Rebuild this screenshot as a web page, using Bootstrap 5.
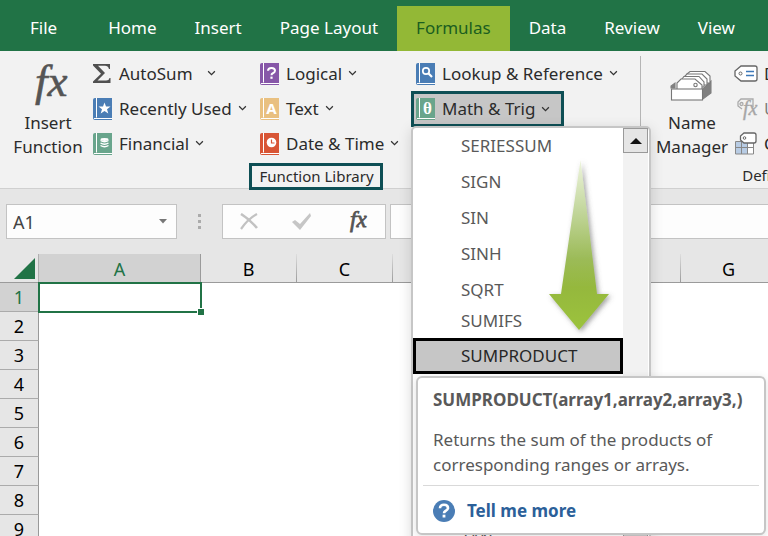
<!DOCTYPE html>
<html lang="en">
<head>
<meta charset="utf-8">
<meta name="viewport" content="width=device-width, initial-scale=1">
<title>Formulas – Math &amp; Trig</title>
<link rel="stylesheet" href="https://cdn.jsdelivr.net/npm/bootstrap@5.3.0/dist/css/bootstrap.min.css">
<style>
body{font-family:"Noto Sans","Open Sans",sans-serif;font-size:17px;line-height:24px;color:#2b2b2b;background:#fff}
button{font:inherit;color:inherit;background:none;border:0;padding:0;text-align:left;white-space:nowrap}
svg{display:block;flex:none}
.fx-glyph{font-family:"Liberation Serif",serif;font-style:italic;fill:#555;stroke:#555}
.tabs-bar{background:#217346;padding:6px 0 0 11px}
.tabs-bar .nav-link{color:#fff;padding:10px 19px 11px;white-space:nowrap;border-radius:0}
.tabs-bar .nav-link.file-tab{margin-right:13px}
.tabs-bar .nav-link.active{background:#93b836;color:#1b5e20}
.ribbon{background:#f2f2f2;height:138px;border-bottom:1px solid #d0d0d0;padding-top:5px}
.ribbon-group{flex:none}
.lib-group{width:641px;border-right:1px solid #b5b5b5;margin-bottom:5px}
.cmd{height:35px;display:flex;align-items:center;gap:6px;padding-left:5px}
.big-cmd{line-height:24px;text-align:center;padding-top:8px;display:flex;flex-direction:column;align-items:center}
.fn-cmd{width:88px;padding-left:8px}
.cmd-col-a{width:167px}
.cmd-col-b{width:156px}
.is-open{background:#c6c6c6;outline:3px solid #0e4f55;outline-offset:-3px;height:36px;width:153px}
.group-label{font-size:15px;line-height:21px}
.lib-label{border:3px solid #0e4f55;background:#f2f2f2;padding:0 6px 0 7px;margin-top:2px}
.name-cmd{width:88px;padding-left:14px}
.menu-panel{position:absolute;top:35px;left:0;z-index:20;width:240px;background:#fff;border:2px solid #c6c6c6;border-radius:5px;box-shadow:0 3px 14px rgba(0,0,0,.14);color:#595959}
.menu-list{width:210px}
.menu-list button{display:block;width:100%;height:36px;padding-left:48px;white-space:nowrap}
.menu-list .short-item{height:30px;padding-bottom:4px}
.menu-list .picked{background:#c6c6c6;outline:3px solid #000;outline-offset:-3px;color:#262626}
.menu-list .after-tip{margin-top:146px}
.scroll-track{background:#f2f2f2;width:25px}
.scroll-btn{width:25px;height:25px;border:1px solid #999;background:#e5e5e5;display:flex;align-items:center;justify-content:center}
.scroll-thumb{background:#cdcdcd;border:1px solid #999;height:40px}
.guide-arrow{position:absolute;left:132px;top:28px}
.tip-card{position:absolute;left:3px;top:38px;width:350px;background:#fff;border:2px solid #c6c6c6;border-radius:6px;color:#595959;box-shadow:0 2px 8px rgba(0,0,0,.12);padding:10px 5px 0}
.tip-card>*{padding-left:10px}
.tip-card h2{font-size:17px;line-height:24px;font-weight:700;margin:0 0 15px}
.tip-card p{font-size:17px;line-height:25px;margin:0;padding-bottom:8px;border-bottom:1px solid #d9d9d9}
.tip-card a{color:#2b6099;font-weight:700;text-decoration:none;gap:12px;padding-top:13px;padding-bottom:10px}
.formula-bar{background:#e6e6e6;padding:15px 0 15px 6px}
.bar-box{background:#fdfdfd;border:1px solid #c3c3c3;height:35px}
.name-box{width:171px}
.name-box input{border:0;background:none;width:100%;color:#444;font-size:18px;padding:0 6px;outline:0}
.bar-tools{width:164px;margin-right:4px}
.dots{width:45px}
.sheet{table-layout:fixed;width:100%;min-width:1064px;border-collapse:separate;border-spacing:0;font-size:18px;line-height:28px;color:#000}
.sheet th{background:#e6e6e6;font-weight:400;text-align:center;padding:0;height:29px}
.sheet td{padding:0}
.sheet thead th{border-bottom:1px solid #9b9b9b;border-right:1px solid;border-image:linear-gradient(#e0e0e0,#999) 1;padding-top:2px;height:29px;line-height:26px}
.sheet tbody th{border-right:1px solid #999;border-bottom:1px solid #ababab;line-height:28px}
.sheet .chosen{background:#d2d2d2;color:#217346}
.sheet thead .chosen{border-image:none;border-color:#9b9b9b}
.sheet .corner{border-image:none;border-right-color:#b0b0b0}
.corner svg{margin:0 0 2px 14px}
.col-head{width:39px}.col-wide{width:162px}.col-std{width:96px}
.active-cell{position:relative;outline:2px solid #217346;outline-offset:-1px}
.active-cell::after{content:"";position:absolute;right:-3px;bottom:-3px;width:7px;height:7px;background:#217346;border:1px solid #fff;border-width:1px 0 0 1px}
</style>
<script src="https://cdn.jsdelivr.net/npm/bootstrap@5.3.0/dist/js/bootstrap.bundle.min.js"></script>
</head>
<body class="d-flex flex-column vh-100 overflow-hidden">
<svg width="0" height="0" class="position-absolute" aria-hidden="true">
  <symbol id="book" viewBox="0 0 20 22"><path d="M2 0H19V22H2Q0 22 0 20V2Q0 0 2 0Z" fill="currentColor"/><path d="M3.500 0V19.500M1 20.500H19" stroke="#fff" stroke-width="1" fill="none"/></symbol>
  <symbol id="chev" viewBox="0 0 8 6"><path d="M1 1L4 4L7 1" fill="none" stroke="#333" stroke-width="1.100"/></symbol>
</svg>

<nav class="tabs-bar" aria-label="Ribbon tabs">
  <div class="nav flex-nowrap">
    <a class="nav-link file-tab" href="#">File</a>
    <a class="nav-link" href="#">Home</a>
    <a class="nav-link" href="#">Insert</a>
    <a class="nav-link" href="#">Page Layout</a>
    <a class="nav-link active" href="#" aria-current="page">Formulas</a>
    <a class="nav-link" href="#">Data</a>
    <a class="nav-link" href="#">Review</a>
    <a class="nav-link" href="#">View</a>
  </div>
</nav>

<section class="ribbon d-flex flex-nowrap position-relative z-1" aria-label="Formulas ribbon">
  <div class="ribbon-group lib-group d-flex flex-column">
    <div class="d-flex">
      <button class="big-cmd fn-cmd flex-shrink-0" type="button">
        <svg width="44" height="43" viewBox="0 0 44 43" aria-hidden="true"><text class="fx-glyph" x="9" y="32" font-size="45" stroke-width=".6">fx</text></svg>
        <span class="mt-1">Insert<br>Function</span>
      </button>
      <div class="cmd-col-a flex-shrink-0">
        <button class="cmd" type="button"><svg width="20" height="20" viewBox="0 0 20 20"><path d="M0 0H17V5H16Q15 1.800 12 1.800H5L12 9L4.500 16.500H13Q16 16.500 16.500 14H17.500V19H0V17.500L8 9.800L0 1.500Z" fill="#505050"/></svg>AutoSum<svg class="ms-2" width="9" height="7"><use href="#chev"/></svg></button>
        <button class="cmd" type="button"><svg width="20" height="22" viewBox="0 0 20 22" color="#4a7db5"><use href="#book"/><path d="M11.500 4.500L13 8.500H17.500L14 11.200L15.300 15.500L11.500 13L7.700 15.500L9 11.200L5.500 8.500H10Z" fill="#fff"/></svg>Recently Used<svg width="9" height="7"><use href="#chev"/></svg></button>
        <button class="cmd" type="button"><svg width="20" height="22" viewBox="0 0 20 22" color="#69a58c"><use href="#book"/><path d="M7.500 7.500Q11.500 10 15.500 7.500M7.500 10Q11.500 12.500 15.500 10M7.500 12.500Q11.500 15 15.500 12.500" fill="none" stroke="#fff" stroke-width="1.400"/><ellipse cx="11.500" cy="6.500" rx="4" ry="1.400" fill="#fff"/></svg>Financial<svg width="9" height="7"><use href="#chev"/></svg></button>
      </div>
      <div class="cmd-col-b flex-shrink-0">
        <button class="cmd" type="button"><svg width="20" height="22" viewBox="0 0 20 22" color="#8757a8"><use href="#book"/><path d="M8 7.800Q8 5 11.500 5Q15 5 15 7.800Q15 9.300 12.500 10.500Q11.500 11 11.500 12.300" fill="none" stroke="#fff" stroke-width="2"/><rect x="10.400" y="13.600" width="2.200" height="2.200" fill="#fff"/></svg>Logical<svg width="9" height="7"><use href="#chev"/></svg></button>
        <button class="cmd" type="button"><svg width="20" height="22" viewBox="0 0 20 22" color="#e9c080"><use href="#book"/><text x="11.500" y="16" text-anchor="middle" font-family="Noto Sans, sans-serif" font-size="15" font-weight="700" fill="#fff">A</text></svg>Text<svg width="9" height="7"><use href="#chev"/></svg></button>
        <button class="cmd" type="button"><svg width="20" height="22" viewBox="0 0 20 22" color="#d85535"><use href="#book"/><circle cx="11.500" cy="9.500" r="4.800" fill="#fff"/><path d="M11.500 6.500V10H14.500" fill="none" stroke="#d85535" stroke-width="1.200"/></svg>Date &amp; Time<svg width="9" height="7"><use href="#chev"/></svg></button>
      </div>
      <div class="flex-shrink-0">
        <button class="cmd" type="button"><svg width="20" height="22" viewBox="0 0 20 22" color="#4a7db5"><use href="#book"/><circle cx="10" cy="8" r="3.200" fill="none" stroke="#fff" stroke-width="1.700"/><path d="M12.300 10.300L16 14" stroke="#fff" stroke-width="2.200"/></svg>Lookup &amp; Reference<svg width="9" height="7"><use href="#chev"/></svg></button>
        <div class="position-relative">
          <button class="cmd is-open" type="button" aria-expanded="true"><svg width="20" height="22" viewBox="0 0 20 22" color="#69a58c"><use href="#book"/><text x="11.500" y="16" text-anchor="middle" font-family="Liberation Serif, serif" font-size="17" font-weight="700" fill="#fff">θ</text></svg>Math &amp; Trig<svg width="9" height="7"><use href="#chev"/></svg></button>
          <div class="menu-panel d-flex">
            <ul class="menu-list list-unstyled mb-0">
              <li><button type="button">SERIESSUM</button></li>
              <li><button type="button">SIGN</button></li>
              <li><button type="button">SIN</button></li>
              <li><button type="button">SINH</button></li>
              <li><button type="button">SQRT</button></li>
              <li><button class="short-item" type="button">SUMIFS</button></li>
              <li class="position-relative">
                <button class="picked" type="button">SUMPRODUCT</button>
                <div class="tip-card" role="tooltip">
                  <h2>SUMPRODUCT(array1,array2,array3,)</h2>
                  <p>Returns the sum of the products of<br>corresponding ranges or arrays.</p>
                  <a class="d-flex align-items-center" href="#"><svg width="22" height="22" viewBox="0 0 22 22"><circle cx="11" cy="11" r="11" fill="#4a7db5"/><path d="M7 8.200Q7 4.800 11 4.800Q15 4.800 15 8Q15 9.700 12.500 11Q11 11.800 11 13.300" fill="none" stroke="#fff" stroke-width="2.600"/><rect x="9.600" y="14.700" width="2.800" height="2.800" fill="#fff"/></svg>Tell me more</a>
                </div>
              </li>
              <li class="after-tip"><button type="button">TAN</button></li>
            </ul>
            <div class="scroll-track d-flex flex-column justify-content-between">
              <button class="scroll-btn" type="button" aria-label="Scroll up"><svg width="12" height="6" viewBox="0 0 12 6"><path d="M0 6L6 0L12 6Z" fill="#111"/></svg></button>
              <div class="scroll-thumb"></div>
            </div>
            <svg class="guide-arrow" width="72" height="184" viewBox="0 0 72 184" aria-hidden="true">
              <defs><linearGradient id="fade" x1="0" y1="0" x2="0" y2="1"><stop offset="0" stop-color="#eef5dd"/><stop offset=".28" stop-color="#c5d8a0"/><stop offset=".58" stop-color="#9cbb58"/><stop offset=".75" stop-color="#95b83d"/><stop offset="1" stop-color="#9cc33c"/></linearGradient>
              <filter id="soft" x="-30%" y="-10%" width="170%" height="125%"><feDropShadow dx="2" dy="2" stdDeviation="2.500" flood-color="#555" flood-opacity=".55"/></filter></defs>
              <path d="M35.500 4L52 138H64L34 174L4 138H16Z" fill="url(#fade)" filter="url(#soft)"/>
            </svg>
          </div>
        </div>
      </div>
    </div>
    <div class="group-label lib-label align-self-center me-2">Function Library</div>
  </div>
  <div class="ribbon-group">
    <div class="d-flex">
      <button class="big-cmd name-cmd" type="button">
        <svg width="44" height="43" viewBox="0 0 44 43" stroke="#777" stroke-width="1.100"><path d="M1 24V22L5 19V24ZM33 35V25L41 17V29Z" fill="#808080" stroke="#808080"/><path d="M17 10L20 7.500H35L40 12V19H30Z" fill="#fff"/><path d="M14 13L17 10H32L37 15V21H28Z" fill="#fff"/><path d="M11 16L14 12.500H29L34 18V23H26Z" fill="#fff"/><path d="M7 25V19L11 15H25L32 21V25" fill="#fff"/><circle cx="25.500" cy="21" r="1.700" fill="#fff"/><rect x="1.500" y="25" width="31" height="11" fill="#fff"/></svg>
        <span class="mt-1 text-center">Name<br>Manager</span>
      </button>
      <div>
        <button class="cmd" type="button"><svg width="24" height="18" viewBox="0 0 24 18"><path d="M7 1H21Q23 1 23 3V14Q23 16 21 16H7L1 11V6Z" fill="#fff" stroke="#666" stroke-width="1.300"/><circle cx="6.500" cy="8.500" r="1.500" fill="none" stroke="#666"/><path d="M12 6.500H20M12 10.500H20" stroke="#3d78b8" stroke-width="1.300"/></svg>Define Name</button>
        <button class="cmd text-black-50" type="button" disabled><svg width="24" height="24" viewBox="0 0 24 24" fill="none" stroke="#aaa" stroke-width="1.300"><path d="M8 12L4 9V5L7 2H19V10"/><circle cx="7.500" cy="7" r="1.500"/><text x="9" y="18" font-family="Liberation Serif, serif" font-style="italic" font-size="20" fill="#a5a5a5" stroke-width=".4">fx</text></svg>Use in Formula</button>
        <button class="cmd" type="button"><svg width="24" height="24" viewBox="0 0 24 24"><path d="M1.500 9.500H19.500V22H1.500Z" fill="#fff"/><path d="M1.500 9.500H13.500V16H1.500ZM1.500 16H7.500V22H1.500ZM7.500 16H13.500V22H7.500Z" fill="#b8cce4"/><path d="M1.500 9.500H19.500V22H1.500ZM1.500 15.500H19.500M7.500 9.500V22M13.500 9.500V22" fill="none" stroke="#888"/><path d="M10 1H20Q22 1 22 3V9Q22 11 20 11H10L6.500 8V4Z" fill="#fff" stroke="#666" stroke-width="1.300"/><circle cx="10.500" cy="6" r="1.300" fill="none" stroke="#666"/></svg>Create from Selection</button>
      </div>
    </div>
    <div class="group-label text-center pt-1 ps-3">Defined Names</div>
  </div>
</section>

<section class="formula-bar d-flex" aria-label="Formula bar">
  <div class="bar-box name-box d-flex align-items-center flex-shrink-0">
    <input type="text" value="A1" aria-label="Name box">
    <svg class="me-2" width="10" height="5" viewBox="0 0 10 5"><path d="M1 0H9L5 4.500Z" fill="#777"/></svg>
  </div>
  <div class="dots d-flex align-items-center justify-content-center flex-shrink-0"><svg width="3" height="16"><path d="M0 0H3V3H0ZM0 6H3V9H0ZM0 12H3V15H0Z" fill="#ababab"/></svg></div>
  <div class="bar-box bar-tools d-flex align-items-center justify-content-around flex-shrink-0">
    <button type="button" aria-label="Cancel"><svg width="18" height="17" viewBox="0 0 18 17" fill="none" stroke="#c2c2c2"><path d="M1 1Q9 6 17 15" stroke-width="2.600"/><path d="M17 1Q8 6 1 16" stroke-width="2.200"/></svg></button>
    <button type="button" aria-label="Enter"><svg width="20" height="17" viewBox="0 0 20 17"><path d="M0 9L3 7L8 11L18 0L19 3L8 17Z" fill="#c6c6c6"/></svg></button>
    <button type="button" aria-label="Insert function"><svg width="22" height="23" viewBox="0 0 22 23"><text class="fx-glyph" x="4" y="17" font-size="23" stroke-width=".8">fx</text></svg></button>
  </div>
  <div class="bar-box flex-grow-1 border-end-0"><input class="w-100 h-100 border-0 bg-transparent" type="text" aria-label="Formula"></div>
</section>

<main class="flex-grow-1 overflow-hidden">
  <table class="sheet">
    <colgroup><col class="col-head"><col class="col-wide"><col class="col-std"><col class="col-std"><col class="col-std"><col class="col-std"><col class="col-std"><col class="col-std"><col></colgroup>
    <thead><tr><th class="corner" aria-label="Select all"><svg width="21" height="21"><path d="M21 0V21H0Z" fill="#217346"/></svg></th><th class="chosen">A</th><th>B</th><th>C</th><th>D</th><th>E</th><th>F</th><th>G</th><th>H</th></tr></thead>
    <tbody>
      <tr><th class="chosen">1</th><td class="active-cell"></td><td colspan="7"></td></tr>
      <tr><th>2</th><td colspan="8"></td></tr>
      <tr><th>3</th><td colspan="8"></td></tr>
      <tr><th>4</th><td colspan="8"></td></tr>
      <tr><th>5</th><td colspan="8"></td></tr>
      <tr><th>6</th><td colspan="8"></td></tr>
      <tr><th>7</th><td colspan="8"></td></tr>
      <tr><th>8</th><td colspan="8"></td></tr>
      <tr><th>9</th><td colspan="8"></td></tr>
    </tbody>
  </table>
</main>
</body>
</html>
